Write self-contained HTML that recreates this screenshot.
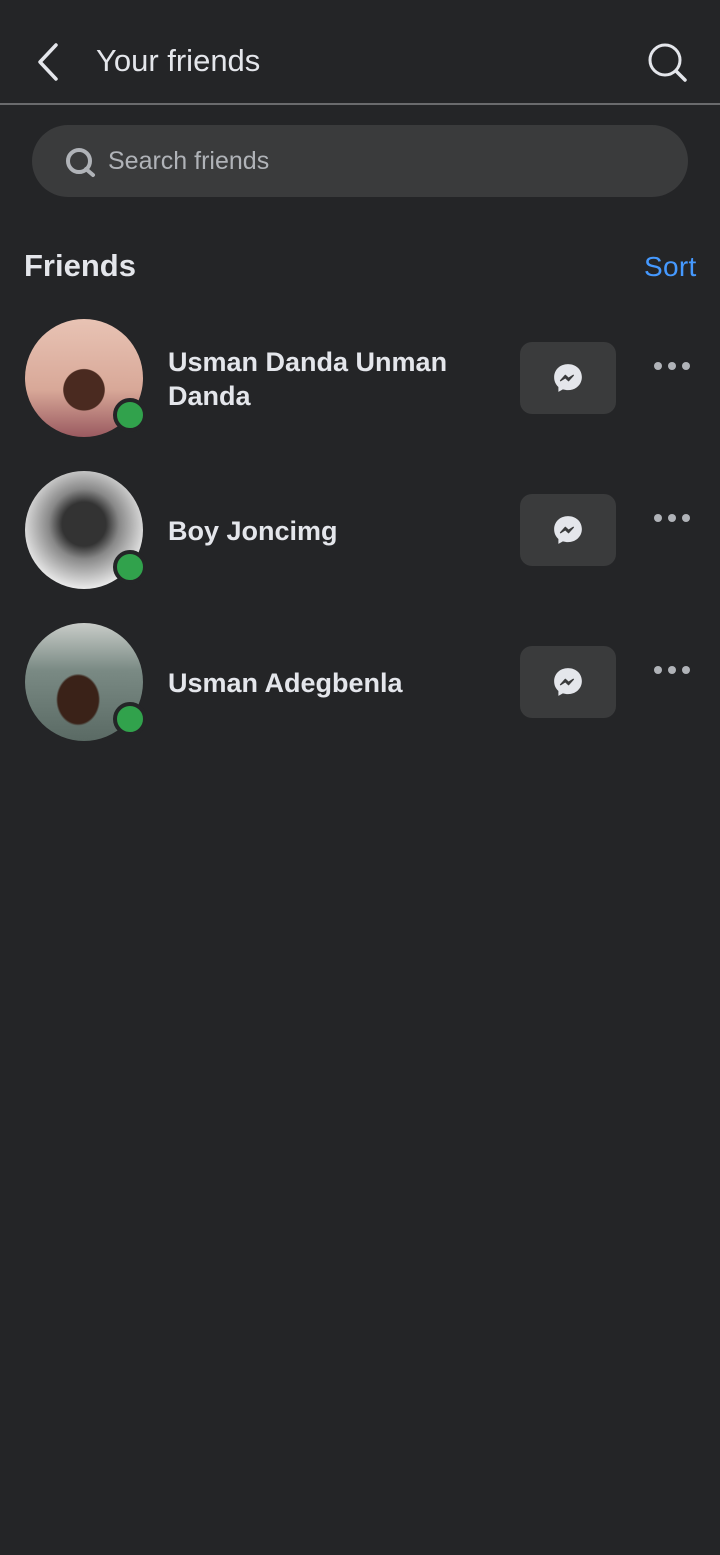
<!DOCTYPE html>
<html><head><style>
body{margin:0;width:720px;height:1555px;background:#242527;font-family:"Liberation Sans",sans-serif;position:relative;overflow:hidden;color:#e4e6eb}
.a{position:absolute}
.title{left:96px;top:43px;font-size:31px;color:#e4e6eb}
.line{left:0;top:103px;width:720px;height:2px;background:#6a6b6d}
.search{left:32px;top:125px;width:656px;height:72px;border-radius:36px;background:#3a3b3c}
.st{left:108px;top:147px;font-size:25px;color:#b0b3b8}
.h{left:24px;top:248px;font-size:31px;font-weight:bold;color:#e4e6eb}
.sort{left:644px;top:251px;font-size:28px;color:#4599ff;letter-spacing:0.3px}
.av{width:118px;height:118px;border-radius:50%;left:25px;overflow:hidden}
.dot{width:26px;height:26px;border-radius:50%;background:#31a24c;border:4px solid #242527;left:113px}
.name{left:168px;font-size:27px;font-weight:bold;line-height:34px;color:#e4e6eb}
.btn{left:520px;width:96px;height:72px;border-radius:12px;background:#3a3b3c}
.btn svg{position:absolute;left:32px;top:20px}
.more{left:654px;width:36px;height:8px}
.more i{position:absolute;top:0;width:8px;height:8px;border-radius:50%;background:#b0b3b8}
</style></head><body>
<svg class="a" style="left:30px;top:42px" width="32" height="40" viewBox="0 0 32 40"><path d="M26 3 L10 20 L26 37" stroke="#e4e6eb" stroke-width="3.5" fill="none" stroke-linecap="round" stroke-linejoin="round"/></svg>
<div class="a title">Your friends</div>
<svg class="a" style="left:646px;top:40px" width="44" height="44" viewBox="0 0 44 44"><circle cx="19" cy="20" r="15" stroke="#e4e6eb" stroke-width="3" fill="none"/><path d="M30 31 L39 40" stroke="#e4e6eb" stroke-width="3.5" stroke-linecap="round"/></svg>
<div class="a line"></div>
<div class="a search"></div>
<svg class="a" style="left:64px;top:145px" width="34" height="34" viewBox="0 0 34 34"><circle cx="15" cy="16" r="11" stroke="#b0b3b8" stroke-width="4" fill="none"/><path d="M22 24 L29 30" stroke="#b0b3b8" stroke-width="4" stroke-linecap="round"/></svg>
<div class="a st">Search friends</div>
<div class="a h">Friends</div>
<div class="a sort">Sort</div>

<div class="a av" style="top:319px;background:radial-gradient(circle at 50% 60%,#4a2a20 0 22%,transparent 23%),linear-gradient(180deg,#e8c3b4 0%,#d8a898 60%,#9a5a60 100%)"></div>
<div class="a dot" style="top:398px"></div>
<div class="a name" style="top:345px">Usman Danda Unman<br>Danda</div>

<div class="a av" style="top:471px;background:radial-gradient(circle at 50% 45%,#333 0 25%,#888 40%,#eee 75%)"></div>
<div class="a dot" style="top:550px"></div>
<div class="a name" style="top:514px">Boy Joncimg</div>

<div class="a av" style="top:623px;background:radial-gradient(ellipse at 45% 65%,#3a2218 0 22%,transparent 24%),linear-gradient(180deg,#c8ccc8 0%,#7a8a84 40%,#5a6a64 100%)"></div>
<div class="a dot" style="top:702px"></div>
<div class="a name" style="top:666px">Usman Adegbenla</div>

<div class="a btn" style="top:342px"><svg width="32" height="32" viewBox="0 0 30 30"><path d="M15 2C7.6 2 2 7.3 2 14.3c0 3.7 1.5 6.9 4 9.1V28l4.2-2.3c1.5.4 3.1.7 4.8.7 7.4 0 13-5.3 13-12.3S22.4 2 15 2z" fill="#e4e6eb"/><path d="M8 17.5l4.5-5 3 2.8 4.5-2.8-4.5 5-3-2.8z" fill="#3a3b3c" stroke="#3a3b3c" stroke-width="1.2" stroke-linejoin="round"/></svg></div>
<div class="a btn" style="top:494px"><svg width="32" height="32" viewBox="0 0 30 30"><path d="M15 2C7.6 2 2 7.3 2 14.3c0 3.7 1.5 6.9 4 9.1V28l4.2-2.3c1.5.4 3.1.7 4.8.7 7.4 0 13-5.3 13-12.3S22.4 2 15 2z" fill="#e4e6eb"/><path d="M8 17.5l4.5-5 3 2.8 4.5-2.8-4.5 5-3-2.8z" fill="#3a3b3c" stroke="#3a3b3c" stroke-width="1.2" stroke-linejoin="round"/></svg></div>
<div class="a btn" style="top:646px"><svg width="32" height="32" viewBox="0 0 30 30"><path d="M15 2C7.6 2 2 7.3 2 14.3c0 3.7 1.5 6.9 4 9.1V28l4.2-2.3c1.5.4 3.1.7 4.8.7 7.4 0 13-5.3 13-12.3S22.4 2 15 2z" fill="#e4e6eb"/><path d="M8 17.5l4.5-5 3 2.8 4.5-2.8-4.5 5-3-2.8z" fill="#3a3b3c" stroke="#3a3b3c" stroke-width="1.2" stroke-linejoin="round"/></svg></div>

<div class="a more" style="top:362px"><i style="left:0"></i><i style="left:14px"></i><i style="left:28px"></i></div>
<div class="a more" style="top:514px"><i style="left:0"></i><i style="left:14px"></i><i style="left:28px"></i></div>
<div class="a more" style="top:666px"><i style="left:0"></i><i style="left:14px"></i><i style="left:28px"></i></div>
</body></html>
